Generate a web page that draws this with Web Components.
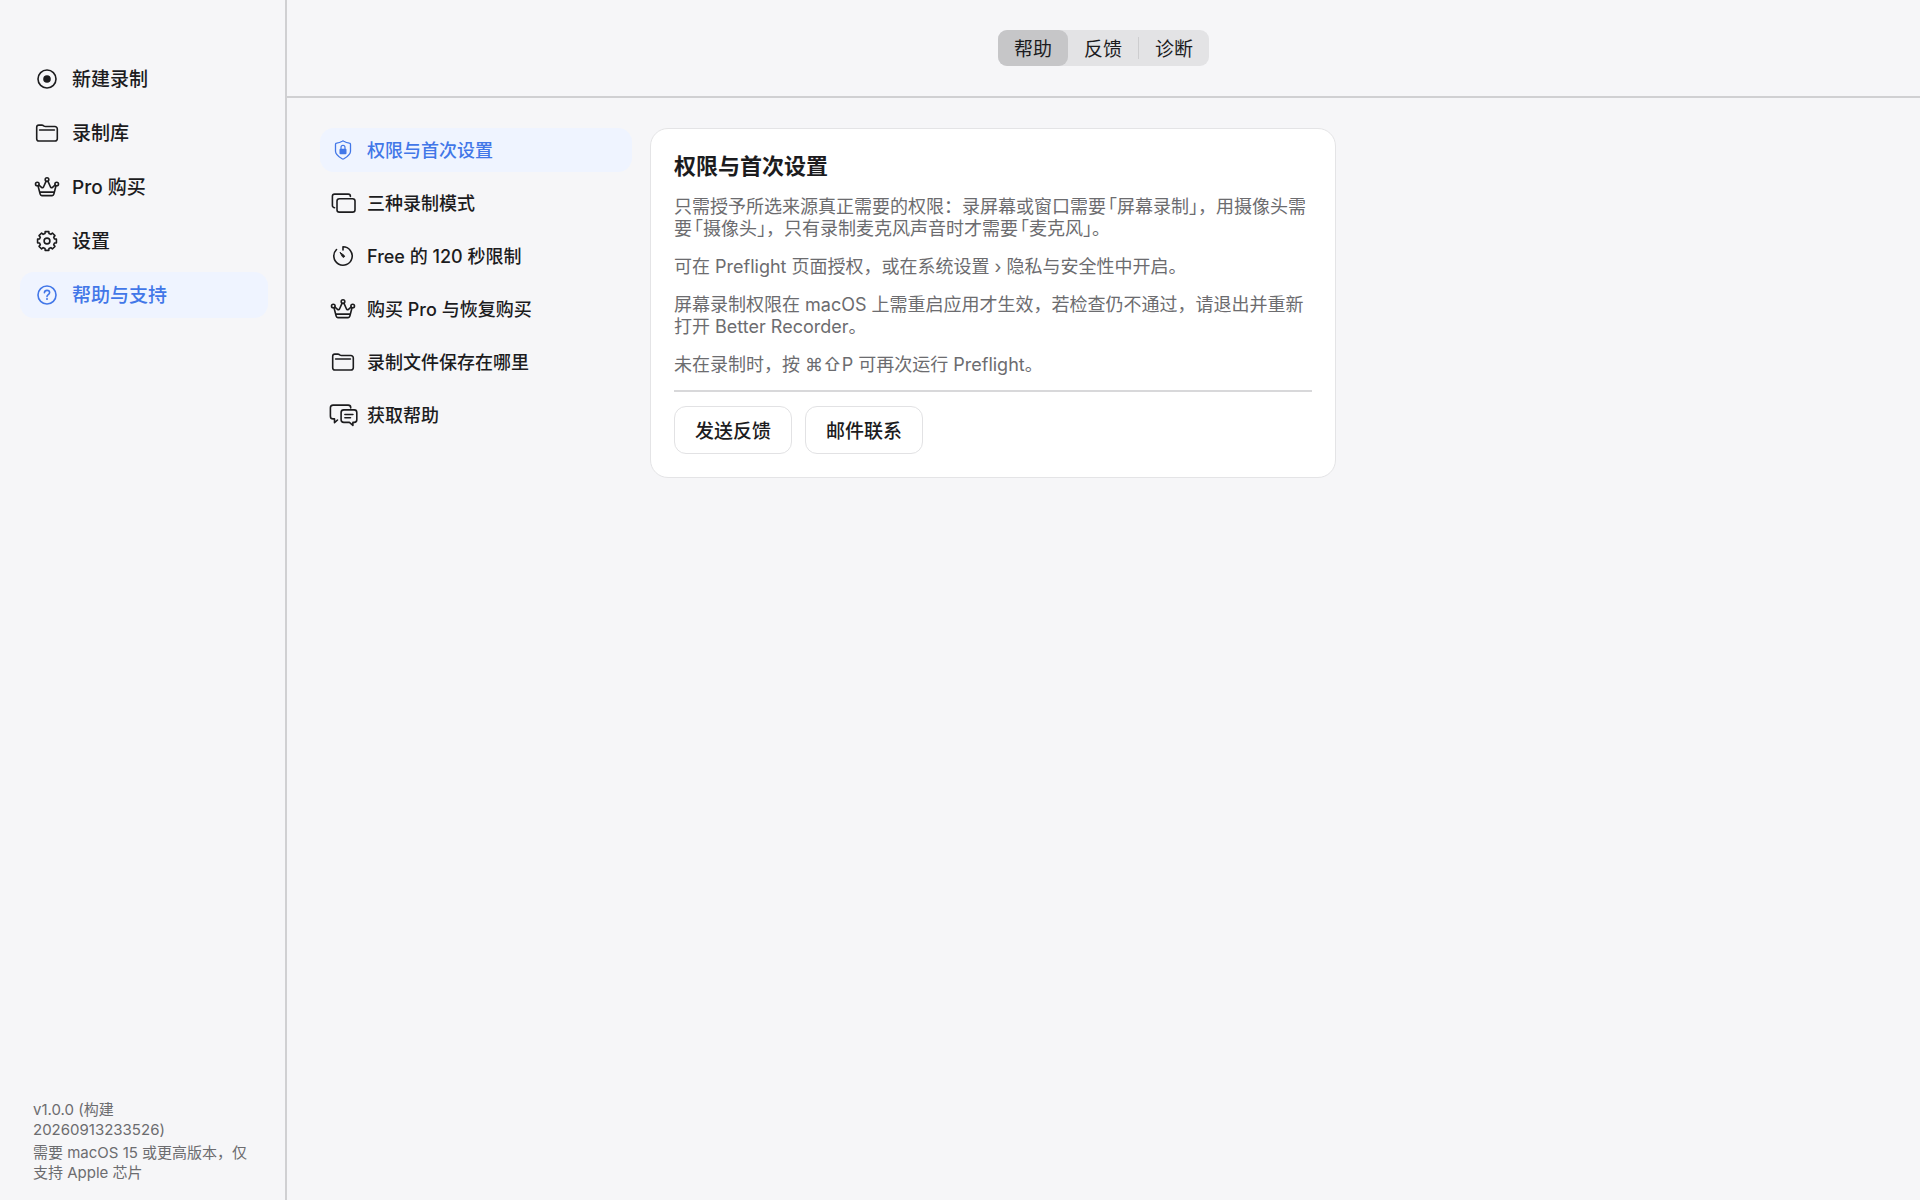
<!DOCTYPE html>
<html lang="zh-CN">
<head>
<meta charset="utf-8">
<title>Better Recorder</title>
<style>
	:root {
		--bg: #f6f6f8;
		--text: #1c1c1e;
		--muted: #6c6c6f;
		--accent: #4277e8;
		--accent-bg: #eff4ff;
		--line: #d0d0d2;
	}
	body {
		margin: 0;
		background: var(--bg);
		color: var(--text);
		font-family: Inter, "Noto Sans CJK SC", sans-serif;
	}
</style>
</head>
<body>
<app-shell>
	<side-nav slot="sidebar">
		<nav-item icon="record">新建录制</nav-item>
		<nav-item icon="folder">录制库</nav-item>
		<nav-item icon="crown">Pro 购买</nav-item>
		<nav-item icon="gear">设置</nav-item>
		<nav-item icon="help" active>帮助与支持</nav-item>
		<span slot="footer">v1.0.0 (构建<br>20260913233526)</span>
		<span slot="footer">需要 macOS 15 或更高版本，仅支持 Apple 芯片</span>
	</side-nav>
	<segmented-control slot="toolbar">
		<segment-button active>帮助</segment-button>
		<segment-button>反馈</segment-button>
		<segment-button divided>诊断</segment-button>
	</segmented-control>
	<topic-list>
		<nav-item small icon="shield" active>权限与首次设置</nav-item>
		<nav-item small icon="windows">三种录制模式</nav-item>
		<nav-item small icon="timer">Free 的 120 秒限制</nav-item>
		<nav-item small icon="crown">购买 Pro 与恢复购买</nav-item>
		<nav-item small icon="folder">录制文件保存在哪里</nav-item>
		<nav-item small icon="chat">获取帮助</nav-item>
	</topic-list>
	<help-card>
		<span slot="title">权限与首次设置</span>
		<help-text><span>只需授予所选来源真正需要的权限：录屏幕或窗口需要</span><open-quote>「</open-quote><span>屏幕录制」，用摄像头需</span><wbr><span>要</span><open-quote>「</open-quote><span>摄像头」，只有录制麦克风声音时才需要</span><open-quote>「</open-quote><span>麦克风」。</span></help-text>
		<help-text>可在 Preflight 页面授权，或在系统设置 › 隐私与安全性中开启。</help-text>
		<help-text>屏幕录制权限在 macOS 上需重启应用才生效，若检查仍不通过，请退出并重新打开 Better Recorder。</help-text>
		<help-text>未在录制时，按 ⌘⇧P 可再次运行 Preflight。</help-text>
		<push-button slot="actions">发送反馈</push-button>
		<push-button slot="actions">邮件联系</push-button>
	</help-card>
</app-shell>

<script>
// eight-toothed cog around 14,14
function gearPath() {
	const points = [];
	for (let i = 0; i < 8; i++) {
		[[-11, 9.6], [11, 9.6], [15, 7.7], [30, 7.7]].forEach(([offset, r]) => {
			const a = (i * 45 + offset) * Math.PI / 180;
			points.push((14 + r * Math.sin(a)).toFixed(2) + ' ' + (14 - r * Math.cos(a)).toFixed(2));
		});
	}
	return 'M' + points.join('L') + 'Z';
}

const ICONS = {
	record: '<circle cx="14" cy="14" r="9"/><circle cx="14" cy="14" r="3.8" fill="currentColor" stroke="none"/>',
	folder: '<path d="M3.7 8.6V8.2a2.1 2.1 0 0 1 2.1-2.1h3.1c.7 0 1.1.2 1.6.6l.4.3c.5.4.9.5 1.6.5h9.4a2.4 2.4 0 0 1 2.4 2.4v9.9a2.2 2.2 0 0 1-2.2 2.2H6a2.3 2.3 0 0 1-2.3-2.3z"/><path d="M6.6 11h14.8"/>',
	crown: '<circle cx="14" cy="6.6" r="1.8"/><circle cx="4.3" cy="11" r="1.8"/><circle cx="23.7" cy="11" r="1.8"/><path d="M5 12.8l2.2 8.4c.2.9.7 1.4 1.6 1.4h10.4c.9 0 1.4-.5 1.6-1.4l2.2-8.4M6 12.1l2.5 2.2c.8.7 1.5.5 2-.3L13 8.4M22 12.1l-2.5 2.2c-.8.7-1.5.5-2-.3L15 8.4M7.2 19.1h13.6"/>',
	gear: `<path d="${gearPath()}"/><circle cx="14" cy="14" r="2.9"/>`,
	help: '<circle cx="14" cy="14" r="9"/><path d="M11.4 11.7c.1-1.4 1.1-2.3 2.6-2.3s2.6.9 2.6 2.2c0 1-.5 1.6-1.4 2.1-.9.6-1.2 1-1.2 1.9"/><circle cx="14" cy="18" r="1" fill="currentColor" stroke="none"/>',
	shield: '<path d="M14 4.9c.3 0 .5.1.8.3 1.8 1.1 3.6 1.7 5.6 2 .8.1 1.1.5 1.1 1.3v6.7c0 2.8-1.4 4.4-6.6 7.6-.6.4-1.2.4-1.8 0-5.2-3.2-6.6-4.8-6.6-7.6V8.5c0-.8.3-1.2 1.1-1.3 2-.3 3.8-.9 5.6-2 .3-.2.5-.3.8-.3z" stroke-width="1.3"/><rect x="10.5" y="12.7" width="7" height="5.6" rx="1" fill="currentColor" stroke="none"/><path d="M12 13v-1.6a2 2 0 0 1 4 0V13" stroke-width="1.2"/>',
	windows: '<rect x="8" y="9.7" width="18" height="13.4" rx="2.4"/><path d="M21.4 7.4V7.3a2.2 2.2 0 0 0-2.2-2.2H5.6a2.2 2.2 0 0 0-2.2 2.2v9.2a2.2 2.2 0 0 0 2.2 2.2"/>',
	timer: '<path d="M14 8V4.8a9.2 9.2 0 1 1-6.5 2.7"/><path d="M11.3 10.6l3.9 2.9a1 1 0 0 1-1.5 1.5z" fill="currentColor" stroke-width="1"/>',
	chat: '<path d="M21.7 6.9V6.6c0-1.5-.9-2.5-2.5-2.5H4.1c-1.7 0-2.7 1-2.7 2.7v8.4c0 1.7 1 2.7 2.7 2.7h1.4v3.8l3-2.7"/><path d="M14.8 8.9h10.4c1.7 0 2.6 1 2.6 2.6v7.3c0 1.6-.9 2.6-2.6 2.6h-1.3v3l-3.5-3h-5.6c-1.7 0-2.7-1-2.7-2.6v-7.3c0-1.6 1-2.6 2.7-2.6z"/><path d="M15.9 13.5h8M15.9 16.7h5.6"/>'
};

function define(name, html, setup) {
	const template = document.createElement('template');
	template.innerHTML = html.trim();
	customElements.define(name, class extends HTMLElement {
		constructor() {
			super();
			this.attachShadow({mode: 'open'}).append(template.content.cloneNode(true));
			if (setup) setup(this, this.shadowRoot);
		}
	});
}

define('app-shell', `
	<style>
		:host {
			display: grid;
			grid-template-columns: 287px 1fr;
			min-height: 100vh;
		}
		aside {
			display: grid;
			border-right: 2px solid var(--line);
		}
		header {
			display: flex;
			align-items: center;
			justify-content: center;
			height: 96px;
			border-bottom: 2px solid var(--line);
		}
		main {
			display: flex;
			align-items: flex-start;
			gap: 18px;
			padding: 30px 33px;
		}
	</style>
	<aside><slot name="sidebar"></slot></aside>
	<div>
		<header><slot name="toolbar"></slot></header>
		<main><slot></slot></main>
	</div>
`);

define('side-nav', `
	<style>
		:host {
			display: flex;
			flex-direction: column;
			justify-content: space-between;
			padding: 56px 17px 17px 20px;
		}
		nav {
			display: flex;
			flex-direction: column;
			gap: 8px;
		}
		footer {
			display: flex;
			flex-direction: column;
			gap: 3px;
			padding: 0 13px;
			color: var(--muted);
			font-size: 15px;
			line-height: 20px;
		}
	</style>
	<nav><slot></slot></nav>
	<footer><slot name="footer"></slot></footer>
`);

define('topic-list', `
	<style>
		:host {
			display: flex;
			flex: 0 0 312px;
			flex-direction: column;
			gap: 9px;
		}
	</style>
	<slot></slot>
`);

define('nav-item', `
	<style>
		:host {
			display: block;
		}
		a {
			display: flex;
			align-items: center;
			gap: 11px;
			height: 46px;
			padding: 0 13px;
			border-radius: 14px;
			color: var(--text);
			font-size: 19px;
			font-weight: 500;
			line-height: 24px;
			text-decoration: none;
		}
		:host([small]) a {
			gap: 10px;
			height: 44px;
			padding: 0 9px;
			font-size: 18px;
		}
		:host([active]) a {
			background: var(--accent-bg);
			color: var(--accent);
		}
		svg {
			flex: none;
			width: 28px;
			height: 28px;
			overflow: visible;
			fill: none;
			stroke: currentColor;
			stroke-width: 1.6;
			stroke-linecap: round;
			stroke-linejoin: round;
		}
		span {
			padding-top: 2px;
		}
	</style>
	<a href="#"><svg viewBox="0 0 28 28" aria-hidden="true"></svg><span><slot></slot></span></a>
`, (host, root) => {
	root.querySelector('svg').innerHTML = ICONS[host.getAttribute('icon')];
});

define('segmented-control', `
	<style>
		:host {
			display: flex;
			border-radius: 9px;
			background: #e3e3e5;
		}
	</style>
	<slot></slot>
`);

define('segment-button', `
	<style>
		:host {
			display: flex;
			align-items: center;
		}
		button {
			width: 70px;
			height: 36px;
			padding: 3px 0 0;
			border: 0;
			border-radius: 9px;
			background: none;
			color: inherit;
			font: 400 19px/24px Inter, "Noto Sans CJK SC", sans-serif;
		}
		:host([active]) button {
			background: #c6c6c8;
		}
		:host([divided])::before {
			width: 1px;
			height: 22px;
			background: #cdcdcf;
			content: "";
		}
	</style>
	<button type="button"><slot></slot></button>
`);

define('help-card', `
	<style>
		:host {
			box-sizing: border-box;
			display: flex;
			flex: 0 1 686px;
			flex-direction: column;
			gap: 14px;
			padding: 21px 23px 23px;
			border: 1px solid #e4e4e6;
			border-radius: 18px;
			background: #fff;
		}
		h2 {
			margin: 0;
			font-size: 22px;
			font-weight: 600;
			line-height: 32px;
		}
		.copy {
			display: flex;
			flex-direction: column;
			gap: 16px;
		}
		hr {
			width: 100%;
			height: 2px;
			margin: 0;
			border: 0;
			background: #d8d8da;
		}
		.actions {
			display: flex;
			gap: 13px;
		}
	</style>
	<h2><slot name="title"></slot></h2>
	<div class="copy"><slot></slot></div>
	<hr>
	<div class="actions"><slot name="actions"></slot></div>
`);

define('help-text', `
	<style>
		:host {
			display: block;
			color: var(--muted);
			font-size: 18px;
			line-height: 22px;
		}
		p {
			margin: 0;
		}
	</style>
	<p><slot></slot></p>
`);

// opening corner bracket set at half width, no whitespace may follow the slot
define('open-quote', `
	<style>
		:host {
			display: inline;
			padding-left: 2px;
			font-feature-settings: "halt";
		}
	</style><slot></slot>
`);

define('push-button', `
	<style>
		:host {
			display: block;
		}
		button {
			height: 48px;
			padding: 3px 20px 0;
			border: 1px solid #e2e2e4;
			border-radius: 12px;
			background: #fff;
			color: var(--text);
			font: 500 19px/24px Inter, "Noto Sans CJK SC", sans-serif;
		}
	</style>
	<button type="button"><slot></slot></button>
`);
</script>
</body>
</html>
